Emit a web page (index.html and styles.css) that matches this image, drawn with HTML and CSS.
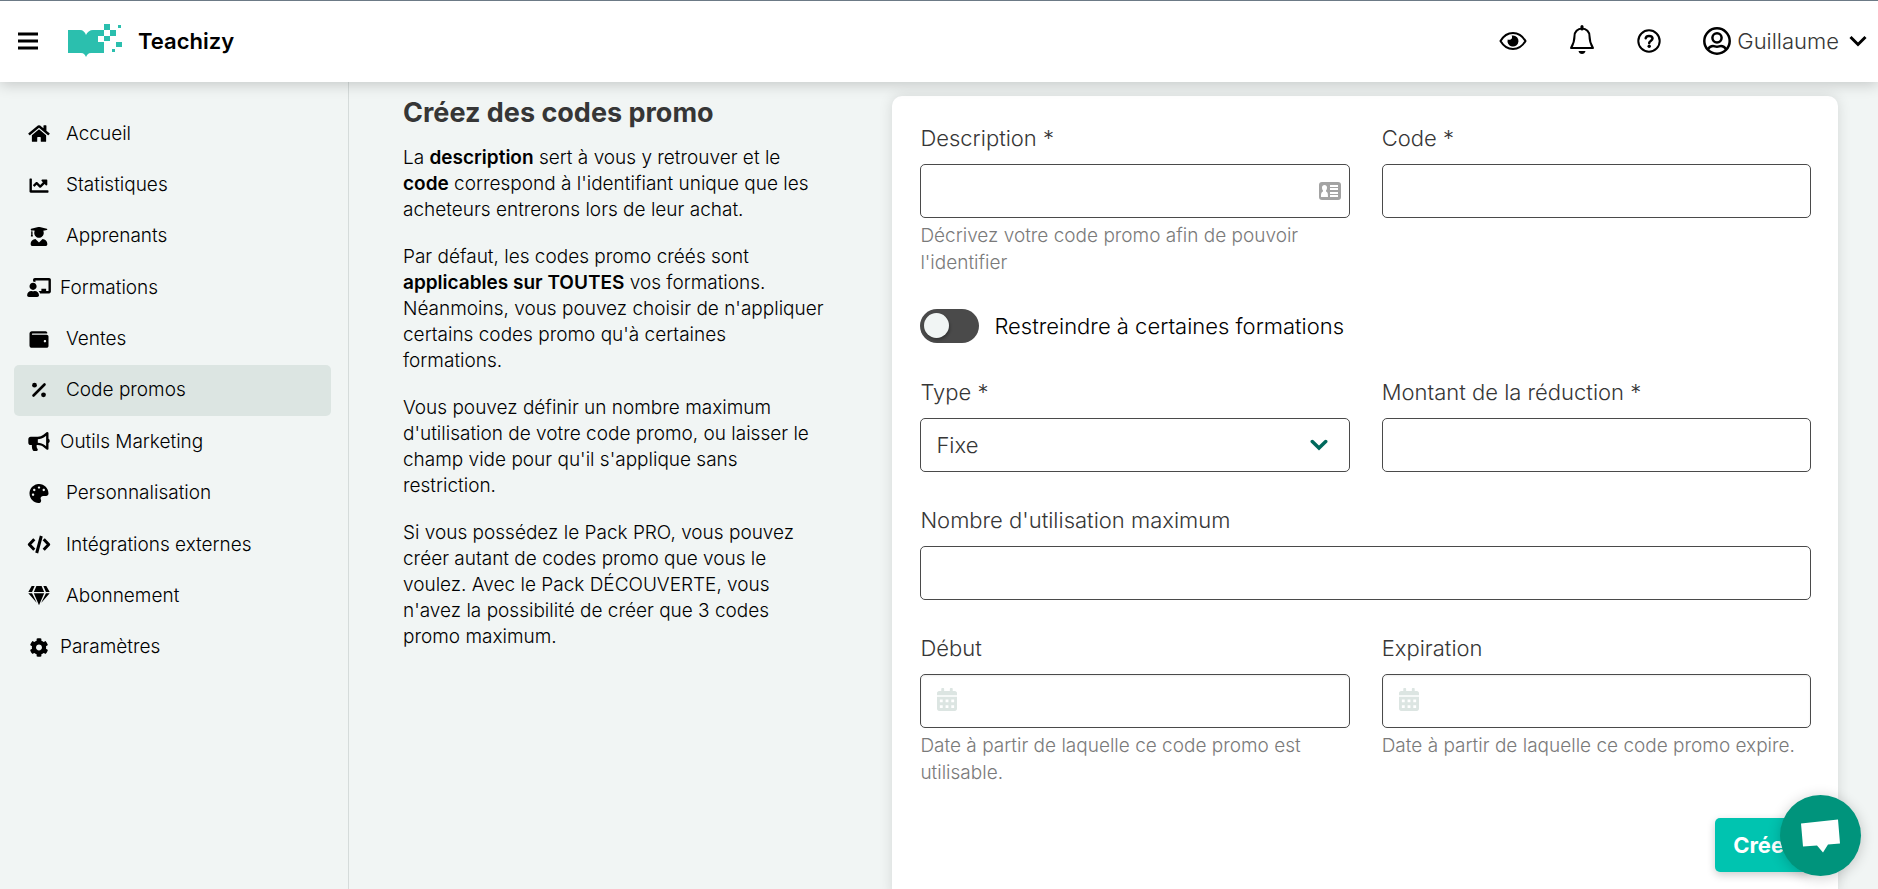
FILE: index.html
```html
<!DOCTYPE html>
<html lang="fr">
<head>
    <meta charset="utf-8">
    <meta name="viewport" content="width=device-width, initial-scale=1.0">
    <title>Teachizy - Codes promo</title>
    <link rel="stylesheet" href="styles.css">
</head>
<body>
    <header class="navbar">
        <button class="icon-btn burger" type="button" aria-label="Menu">
            <svg width="20" height="18" viewBox="0 0 20 18"><path d="M0 2h20M0 9h20M0 16h20" stroke="currentColor" stroke-width="3"/></svg>
        </button>
        <a class="brand" href="#">
            <svg width="54" height="34" viewBox="0 0 54 34" fill="#2bbfae">
                <path d="M0 6h12c3 0 5 2 6 5 1-3 4-5 7-5h5v6h6v12h0v5H23c-3 0-4 2-5 4-1-2-2-4-5-4H0z"/>
                <path fill="#fff" d="M30 12h6v6h-6z"/>
                <path d="M36 0h6v6h-6zM30 6h6v6h-6zM42 6h6v6h-6zM36 12h6v5h-6zM48 18h6v5h-6zM50 1h3v3h-3zM44 25h3v3h-3z"/>
            </svg>
            <span>Teachizy</span>
        </a>
        <div class="navbar-end">
            <button class="icon-btn" type="button" aria-label="Aperçu">
                <svg width="28" height="20" viewBox="0 0 28 20"><path d="M1.500 10C5 4 9 2 14 2s9 2 12.500 8C23 16 19 18 14 18S5 16 1.500 10z" fill="none" stroke="currentColor" stroke-width="2"/><path d="M14 4.500a5.500 5.500 0 1 1-5.300 4c1.700.8 3.800.2 4.300-1.500.2-.9 0-1.800-.4-2.400.4-.1.900-.1 1.400-.1z"/></svg>
            </button>
            <button class="icon-btn" type="button" aria-label="Notifications">
                <svg width="26" height="32" viewBox="0 0 26 32"><path d="M13 3.500c-4.500 0-7.500 3.500-7.500 7.500 0 6-1 8-3.500 12h22c-2.500-4-3.500-6-3.500-12 0-4-3-7.500-7.500-7.500z" fill="none" stroke="currentColor" stroke-width="2" stroke-linejoin="round"/><path d="M13 1.500V4" stroke="currentColor" stroke-width="3" stroke-linecap="round"/><path d="M9.500 26h7c-.4 2-1.700 3-3.500 3s-3.100-1-3.500-3z"/></svg>
            </button>
            <button class="icon-btn" type="button" aria-label="Aide">
                <svg width="24" height="24" viewBox="0 0 24 24"><circle cx="12" cy="12" r="10.700" fill="none" stroke="currentColor" stroke-width="2"/><path d="M8.700 9.300C9 7.600 10.200 6.900 12 6.900c2 0 3.500 1 3.500 2.700 0 2.400-3.300 2.300-3.300 4.300" fill="none" stroke="currentColor" stroke-width="2.500" stroke-linecap="round"/><circle cx="12.200" cy="17.300" r="1.700"/></svg>
            </button>
            <button class="icon-btn user" type="button">
                <svg width="28" height="28" viewBox="0 0 28 28" fill="none" stroke="currentColor" stroke-width="2.500"><circle cx="14" cy="14" r="12.700"/><circle cx="14" cy="10.800" r="4.600"/><path d="M4.800 22.300c1.200-2 3-3.300 5.200-3.300 1.500 0 2.300.8 4 .8s2.500-.8 4-.8c2.200 0 4 1.300 5.200 3.300"/></svg>
                <span>Guillaume</span>
                <svg class="user-arrow" width="18" height="12" viewBox="0 0 18 12"><path d="M1.500 2L9 9.500 16.500 2" fill="none" stroke="currentColor" stroke-width="3"/></svg>
            </button>
        </div>
    </header>

    <div class="page">
        <nav class="sidebar">
            <ul class="menu">
                <li><a href="#">
                    <svg viewBox="0 0 576 512" width="21" height="19"><path d="M280.370 148.260L96 300.110V464a16 16 0 0 0 16 16l112.060-.29a16 16 0 0 0 15.920-16V368a16 16 0 0 1 16-16h64a16 16 0 0 1 16 16v95.640a16 16 0 0 0 16 16.050L464 480a16 16 0 0 0 16-16V300L295.670 148.260a12.190 12.190 0 0 0-15.300 0zM571.600 251.470L488 182.560V44.050a12 12 0 0 0-12-12h-56a12 12 0 0 0-12 12v72.610L318.470 43a48 48 0 0 0-61 0L4.340 251.470a12 12 0 0 0-1.600 16.900l25.500 31A12 12 0 0 0 45.150 301l235.220-193.740a12.190 12.190 0 0 1 15.300 0L530.900 301a12 12 0 0 0 16.900-1.600l25.500-31a12 12 0 0 0-1.700-16.930z"/></svg>
                    <span>Accueil</span></a></li>
                <li><a href="#">
                    <svg viewBox="0 0 512 512" width="19" height="19"><path d="M496 384H64V80c0-8.840-7.160-16-16-16H16C7.160 64 0 71.160 0 80v336c0 17.670 14.330 32 32 32h464c8.840 0 16-7.160 16-16v-32c0-8.840-7.160-16-16-16zM464 96H345.940c-21.380 0-32.090 25.850-16.970 40.970l32.400 32.400L288 242.750l-73.370-73.370c-12.500-12.500-32.760-12.500-45.250 0l-68.690 68.690c-6.250 6.250-6.250 16.380 0 22.630l22.620 22.620c6.250 6.250 16.380 6.250 22.630 0L192 237.250l73.370 73.370c12.500 12.500 32.760 12.500 45.250 0l96-96 32.400 32.400c15.120 15.120 40.970 4.410 40.970-16.970V112c.01-8.840-7.150-16-15.990-16z"/></svg>
                    <span>Statistiques</span></a></li>
                <li><a href="#">
                    <svg viewBox="0 0 448 512" width="17" height="19"><path d="M319.400 320.600L224 416l-95.400-95.400C57.100 323.700 0 382.200 0 454.400v9.600c0 26.500 21.500 48 48 48h352c26.500 0 48-21.500 48-48v-9.600c0-72.200-57.100-130.700-128.600-133.800zM13.600 79.800l6.400 1.500v58.400c-7 4.200-12 11.500-12 20.300 0 8.400 4.600 15.400 11.100 19.700L3.500 242c-1.700 6.900 2.100 14 7.600 14h41.800c5.500 0 9.300-7.100 7.600-14l-15.600-62.300C51.400 175.400 56 168.400 56 160c0-8.800-5-16.100-12-20.300V87.100l66 15.900c-8.600 17.200-14 36.400-14 57 0 70.700 57.300 128 128 128s128-57.300 128-128c0-20.600-5.300-39.800-14-57l96.300-23.200c18.200-4.400 18.200-27.100 0-31.500l-190.400-46c-13-3.100-26.700-3.100-39.700 0L13.600 48.200c-18.100 4.400-18.100 27.200 0 31.600z"/></svg>
                    <span>Apprenants</span></a></li>
                <li class="tight"><a href="#">
                    <svg viewBox="0 0 640 512" width="24" height="19"><path d="M208 352c-2.390 0-4.780.35-7.060 1.090C187.980 357.300 174.350 360 160 360c-14.350 0-27.980-2.700-40.950-6.910-2.280-.74-4.660-1.090-7.050-1.090C49.940 352-.33 402.480 0 464.620.14 490.880 21.730 512 48 512h224c26.270 0 47.860-21.120 48-47.380.33-62.140-49.940-112.620-112-112.620zm-48-32c53.020 0 96-42.980 96-96s-42.980-96-96-96-96 42.980-96 96 42.980 96 96 96zM592 0H208c-26.470 0-48 22.250-48 49.590V96c23.420 0 45.100 6.780 64 17.800V64h352v288h-64v-64H384v64h-76.240c19.100 16.690 33.120 38.730 39.690 64H592c26.470 0 48-22.250 48-49.590V49.590C640 22.250 618.470 0 592 0z"/></svg>
                    <span>Formations</span></a></li>
                <li><a href="#">
                    <svg viewBox="0 0 512 512" width="19" height="19"><path d="M461.200 128H80c-8.840 0-16-7.160-16-16s7.160-16 16-16h384c8.840 0 16-7.160 16-16 0-26.510-21.490-48-48-48H64C28.650 32 0 60.650 0 96v320c0 35.350 28.650 64 64 64h397.200c28.020 0 50.800-21.530 50.800-48V176c0-26.470-22.780-48-50.800-48zM416 336c-17.670 0-32-14.330-32-32s14.330-32 32-32 32 14.330 32 32-14.330 32-32 32z"/></svg>
                    <span>Ventes</span></a></li>
                <li><a class="is-active" href="#">
                    <svg viewBox="0 0 16 16" width="16" height="16"><circle cx="3.500" cy="3.200" r="2.400"/><circle cx="12.500" cy="12.800" r="2.400"/><path d="M2.500 13.500l11-11" stroke="currentColor" stroke-width="2.600" stroke-linecap="round"/></svg>
                    <span>Code promos</span></a></li>
                <li class="tight"><a href="#">
                    <svg viewBox="0 0 576 512" width="22" height="19"><path d="M576 240c0-23.630-12.950-44.040-32-55.120V32.010C544 23.260 537.020 0 512 0c-7.120 0-14.190 2.380-19.980 7.020l-85.030 68.030C364.280 109.190 310.660 128 256 128H64c-35.350 0-64 28.650-64 64v96c0 35.350 28.650 64 64 64h33.700c-1.390 10.480-2.180 21.140-2.180 32 0 39.770 9.260 77.350 25.560 110.940 5.190 10.690 16.520 17.060 28.400 17.060h74.280c26.050 0 41.690-29.840 25.900-50.560-16.400-21.520-26.150-48.360-26.150-77.440 0-11.110 1.620-21.790 4.410-32H256c54.660 0 108.280 18.810 150.980 52.950l85.030 68.030a32.023 32.023 0 0 0 19.980 7.020c24.920 0 32-22.780 32-32V295.130C563.050 284.040 576 263.630 576 240zm-96 141.420l-33.050-26.440C392.950 311.780 325.120 288 256 288v-96c69.120 0 136.950-23.780 190.950-66.980L480 98.580v282.840z"/></svg>
                    <span>Outils Marketing</span></a></li>
                <li><a href="#">
                    <svg viewBox="0 0 512 512" width="19" height="19"><path d="M204.300 5C104.900 24.400 24.800 104.300 5.200 203.400c-37 187 131.700 326.400 258.800 306.700 41.200-6.400 61.400-54.600 42.500-91.700-23.100-45.400 9.900-98.400 60.900-98.400h79.700c35.800 0 64.800-29.600 64.900-65.300C511.500 97.100 368.100-26.900 204.300 5zM96 320c-17.700 0-32-14.300-32-32s14.300-32 32-32 32 14.300 32 32-14.300 32-32 32zm32-128c-17.700 0-32-14.300-32-32s14.300-32 32-32 32 14.300 32 32-14.300 32-32 32zm128-64c-17.700 0-32-14.300-32-32s14.300-32 32-32 32 14.300 32 32-14.300 32-32 32zm128 64c-17.700 0-32-14.300-32-32s14.300-32 32-32 32 14.300 32 32-14.300 32-32 32z"/></svg>
                    <span>Personnalisation</span></a></li>
                <li><a href="#">
                    <svg viewBox="0 0 24 19" width="24" height="19" fill="none" stroke="currentColor" stroke-width="3"><path d="M7.300 4.200L2.300 9.500l5 5.300M16.700 4.200l5 5.300-5 5.300M14.300 1L9.700 18" stroke-linejoin="round"/></svg>
                    <span>Intégrations externes</span></a></li>
                <li><a href="#">
                    <svg viewBox="0 0 576 512" width="21" height="19"><path d="M485.500 0L576 160H474.900L405.700 0h79.800zm-128 0l69.200 160H149.300L218.500 0h139zm-267 0h79.800l-69.200 160H0L90.500 0zM0 192h100.700l123 251.700c1.500 3.100-2.700 5.900-5 3.300L0 192zm148.200 0h279.600l-137 318.200c-1 2.400-4.500 2.400-5.500 0L148.200 192zm204.100 251.700l123-251.700H576L357.300 446.900c-2.300 2.700-6.500-.1-5-3.200z"/></svg>
                    <span>Abonnement</span></a></li>
                <li class="tight"><a href="#">
                    <svg viewBox="0 0 512 512" width="19" height="19"><path d="M487.400 315.700l-42.600-24.600c4.300-23.200 4.300-47 0-70.200l42.600-24.600c4.900-2.800 7.100-8.600 5.500-14-11.100-35.600-30-67.800-54.700-94.600-3.800-4.100-10-5.100-14.800-2.300L380.800 110c-17.900-15.400-38.500-27.300-60.800-35.100V25.800c0-5.600-3.900-10.500-9.400-11.700-36.700-8.200-74.300-7.800-109.200 0-5.500 1.200-9.400 6.100-9.400 11.700V75c-22.200 7.900-42.800 19.800-60.800 35.100L88.700 85.500c-4.900-2.800-11-1.900-14.800 2.300-24.700 26.700-43.600 58.900-54.700 94.600-1.700 5.400.6 11.200 5.500 14L67.300 221c-4.300 23.200-4.300 47 0 70.200l-42.600 24.600c-4.900 2.800-7.100 8.600-5.500 14 11.100 35.600 30 67.800 54.700 94.600 3.800 4.100 10 5.100 14.800 2.300l42.600-24.600c17.900 15.400 38.500 27.300 60.800 35.100v49.200c0 5.600 3.900 10.500 9.400 11.700 36.700 8.200 74.300 7.800 109.200 0 5.500-1.200 9.400-6.100 9.400-11.700v-49.200c22.200-7.900 42.800-19.800 60.800-35.100l42.600 24.600c4.900 2.800 11 1.900 14.800-2.300 24.700-26.700 43.600-58.900 54.700-94.600 1.500-5.500-.7-11.300-5.600-14.100zM256 336c-44.100 0-80-35.900-80-80s35.900-80 80-80 80 35.900 80 80-35.900 80-80 80z"/></svg>
                    <span>Paramètres</span></a></li>
            </ul>
        </nav>

        <main class="content">
            <section class="intro">
                <h1>Créez des codes promo</h1>
                <p>La <strong>description</strong> sert à vous y retrouver et le <strong>code</strong> correspond à l'identifiant unique que les acheteurs entrerons lors de leur achat.</p>
                <p>Par défaut, les codes promo créés sont <strong>applicables sur TOUTES</strong> vos formations. Néanmoins, vous pouvez choisir de n'appliquer certains codes promo qu'à certaines formations.</p>
                <p>Vous pouvez définir un nombre maximum d'utilisation de votre code promo, ou laisser le champ vide pour qu'il s'applique sans restriction.</p>
                <p>Si vous possédez le Pack PRO, vous pouvez créer autant de codes promo que vous le voulez. Avec le Pack DÉCOUVERTE, vous n'avez la possibilité de créer que 3 codes promo maximum.</p>
            </section>

            <form class="card">
                <div class="row">
                    <div class="field">
                        <label for="description">Description *</label>
                        <div class="control">
                            <input id="description" type="text">
                            <svg class="icon-right" width="22" height="18" viewBox="0 0 22 18"><rect width="22" height="18" rx="3" fill="#a3a3a3"/><path fill="#fff" d="M11 3h8v2h-8zM11 6h8v2h-8zM11 10h8v2h-8zM11 13h8v2h-8zM5.500 3C7 3 8 4 8 5.500S7.500 8 7 8.500v1c1.500.5 2 1.500 2 5.500H2c0-4 .5-5 2-5.500v-1C3.500 8 3 7 3 5.500S4 3 5.500 3z"/></svg>
                        </div>
                        <p class="help">Décrivez votre code promo afin de pouvoir l'identifier</p>
                    </div>
                    <div class="field">
                        <label for="code">Code *</label>
                        <input id="code" type="text">
                    </div>
                </div>

                <label class="switch">
                    <input type="checkbox" role="switch">
                    <span>Restreindre à certaines formations</span>
                </label>

                <div class="row">
                    <div class="field">
                        <label for="type">Type *</label>
                        <div class="control">
                            <select id="type">
                                <option>Fixe</option>
                                <option>Pourcentage</option>
                            </select>
                            <svg class="icon-right select-arrow" width="18" height="12" viewBox="0 0 18 12"><path d="M2.300 2.500L9 9l6.700-6.500" fill="none" stroke="#00695c" stroke-width="3.500" stroke-linecap="round"/></svg>
                        </div>
                    </div>
                    <div class="field">
                        <label for="montant">Montant de la réduction *</label>
                        <input id="montant" type="text">
                    </div>
                </div>

                <div class="field">
                    <label for="max">Nombre d'utilisation maximum</label>
                    <input id="max" type="text">
                </div>

                <div class="row">
                    <div class="field">
                        <label for="debut">Début</label>
                        <div class="control">
                            <input id="debut" class="date" type="text">
                            <svg class="icon-left" width="20" height="23" viewBox="0 0 448 512"><path fill-rule="evenodd" d="M0 192h448v272c0 26.500-21.500 48-48 48H48c-26.500 0-48-21.500-48-48zM64 256v64h64v-64zM192 256v64h64v-64zM320 256v64h64v-64zM64 384v64h64v-64zM192 384v64h64v-64zM320 384v64h64v-64z"/><path d="M400 64h-48V16c0-8.800-7.200-16-16-16h-32c-8.800 0-16 7.200-16 16v48H160V16c0-8.800-7.200-16-16-16h-32c-8.800 0-16 7.200-16 16v48H48C21.500 64 0 85.500 0 112v48h448v-48c0-26.500-21.500-48-48-48z"/></svg>
                        </div>
                        <p class="help">Date à partir de laquelle ce code promo est utilisable.</p>
                    </div>
                    <div class="field">
                        <label for="expiration">Expiration</label>
                        <div class="control">
                            <input id="expiration" class="date" type="text">
                            <svg class="icon-left" width="20" height="23" viewBox="0 0 448 512"><path fill-rule="evenodd" d="M0 192h448v272c0 26.500-21.500 48-48 48H48c-26.500 0-48-21.500-48-48zM64 256v64h64v-64zM192 256v64h64v-64zM320 256v64h64v-64zM64 384v64h64v-64zM192 384v64h64v-64zM320 384v64h64v-64z"/><path d="M400 64h-48V16c0-8.800-7.200-16-16-16h-32c-8.800 0-16 7.200-16 16v48H160V16c0-8.800-7.200-16-16-16h-32c-8.800 0-16 7.200-16 16v48H48C21.500 64 0 85.500 0 112v48h448v-48c0-26.500-21.500-48-48-48z"/></svg>
                        </div>
                        <p class="help">Date à partir de laquelle ce code promo expire.</p>
                    </div>
                </div>

                <button class="submit" type="submit">Créer</button>
            </form>
        </main>
    </div>

    <button class="chat" type="button" aria-label="Chat">
        <svg width="40" height="34" viewBox="0 0 40 34"><path fill="#fff" d="M0 4.500l37-4 2 24-12 1-5 8-6-7-14 1z"/></svg>
    </button>
</body>
</html>
```

FILE: styles.css
```css
* {
    box-sizing: border-box;
}
body {
    margin: 0;
    height: 100vh;
    display: flex;
    flex-direction: column;
    overflow: hidden;
    background: #f1f5f4;
    color: #000;
    font-family: Inter, "Noto Sans", sans-serif;
    font-size: 19px;
    font-weight: 300;
    line-height: 26px;
}
h1, p, ul {
    margin: 0;
    padding: 0;
}
a {
    color: inherit;
    text-decoration: none;
}
button, input, select {
    font: inherit;
    color: inherit;
}
svg {
    flex: none;
    display: block;
    fill: currentColor;
}
svg[fill="none"] {
    fill: none;
}

/* top bar */
.navbar {
    position: relative;
    z-index: 2;
    flex: none;
    height: 82px;
    padding: 0 11px 2px 18px;
    display: flex;
    align-items: center;
    border-top: 1px solid #6c7a86;
    background: #fff;
    box-shadow: 0 2px 14px rgba(0, 0, 0, .2);
}
.icon-btn {
    padding: 0;
    border: 0;
    background: none;
    display: flex;
    align-items: center;
}
.brand {
    margin-left: 30px;
    display: flex;
    align-items: center;
    gap: 16px;
    font-size: 22px;
    font-weight: 600;
}
.brand svg {
    fill: #2bbfae;
}
.navbar-end {
    margin-left: auto;
    display: flex;
    align-items: center;
    gap: 42px;
}
.user {
    gap: 6px;
    color: #000;
    font-size: 22px;
}
.user span {
    color: #363636;
}
.user-arrow {
    margin-left: 4px;
}

/* sidebar */
.page {
    flex: 1;
    min-height: 0;
    display: flex;
}
.sidebar {
    flex: none;
    width: 349px;
    padding: 26px 17px 0 14px;
    border-right: 1px solid #d5dbda;
}
.menu {
    min-height: 565px;
    display: grid;
    grid-auto-rows: 1fr;
    list-style: none;
}
.menu a {
    height: 100%;
    padding-left: 13px;
    display: flex;
    align-items: center;
    gap: 15px;
    border-radius: 5px;
}
.menu svg {
    /* same column for all icons whatever their width */
    width: 24px;
}
.menu .tight a {
    gap: 9px;
}
.menu .is-active {
    background: #dce5e2;
}

/* content */
.content {
    flex: 1;
    padding: 14px 40px 28px 54px;
    display: grid;
    grid-template-columns: minmax(0, 11fr) minmax(0, 24fr);
    gap: 56px;
    overflow-y: auto;
    scrollbar-width: none;
}
.intro {
    padding-right: 10px;
}
.intro h1 {
    margin-bottom: 15px;
    color: #363636;
    font-size: 27px;
    font-weight: 700;
    line-height: 34px;
}
.intro p + p {
    margin-top: 21px;
}
strong {
    font-weight: 600;
}

/* form */
.card {
    padding: 26px 27px 28px 28px;
    display: flex;
    flex-direction: column;
    gap: 32px;
    border-radius: 10px;
    background: #fff;
    box-shadow: 0 0 14px rgba(0, 0, 0, .12);
}
.row {
    display: grid;
    grid-template-columns: repeat(2, minmax(0, 1fr));
    gap: 32px;
}
.field label {
    display: block;
    margin-bottom: 9px;
    color: #363636;
    font-size: 22px;
    line-height: 33px;
}
.control {
    position: relative;
}
.field input, .field select {
    display: block;
    width: 100%;
    height: 54px;
    padding: 0 15px;
    border: 1px solid #4a4a4a;
    border-radius: 5px;
    background: #fff;
    color: #363636;
    font-size: 22px;
    appearance: none;
}
.field .date {
    padding-left: 50px;
    box-shadow: inset 0 1px 2px rgba(0, 0, 0, .08);
}
.icon-right, .icon-left {
    position: absolute;
    top: 0;
    bottom: 0;
    margin: auto 0;
    pointer-events: none;
}
.icon-right {
    right: 9px;
}
.select-arrow {
    right: 22px;
}
.icon-left {
    bottom: 3px;
    left: 17px;
    color: #dce5e2;
}
.help {
    margin-top: 4px;
    color: #7a7a7a;
    line-height: 27px;
}
.switch {
    height: 36px;
    display: flex;
    align-items: center;
    gap: 15px;
    font-size: 22px;
}
.switch input {
    margin: 0;
    width: 59px;
    height: 34px;
    padding: 4px;
    border-radius: 17px;
    background: #4a4a4a;
    appearance: none;
}
.switch input::before {
    content: "";
    display: block;
    width: 25px;
    height: 25px;
    border-radius: 50%;
    background: #f1f5f4;
    box-shadow: 1px 2px 3px rgba(0, 0, 0, .3);
}
.switch input:checked {
    background: #00c4b0;
}
.switch input:checked::before {
    margin-left: 26px;
}
.submit {
    align-self: flex-end;
    height: 54px;
    padding: 0 18px;
    border: 0;
    border-radius: 5px;
    background: #00c4b0;
    color: #fff;
    font-size: 22px;
    font-weight: 700;
    box-shadow: 0 3px 8px rgba(0, 0, 0, .2);
}

/* chat bubble over the page */
.chat {
    position: fixed;
    right: 17px;
    bottom: 13px;
    z-index: 3;
    width: 81px;
    height: 81px;
    padding: 0;
    display: flex;
    align-items: center;
    justify-content: center;
    border: 0;
    border-radius: 50%;
    background: #00947c;
    box-shadow: 0 2px 14px rgba(0, 0, 0, .2);
}
```
